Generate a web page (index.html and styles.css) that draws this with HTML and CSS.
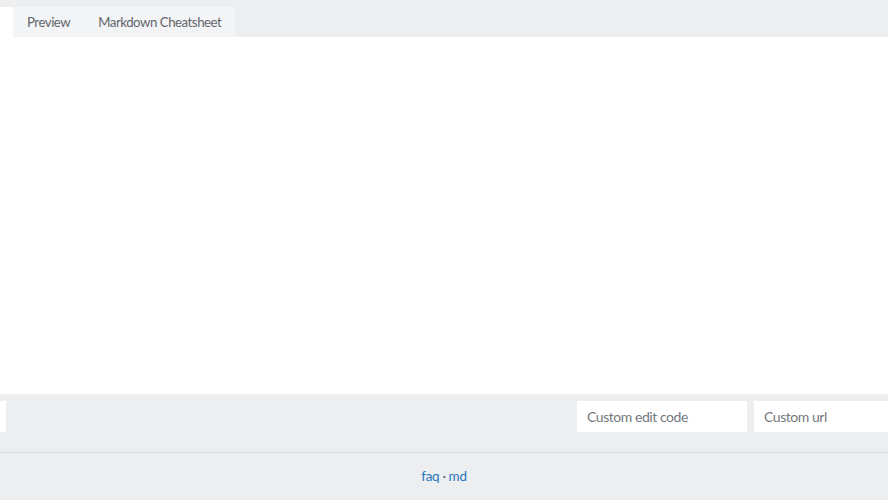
FILE: index.html
```html
<!DOCTYPE html>
<html lang="en">
<head>
<meta charset="utf-8">
<title>Editor</title>
<link rel="stylesheet" href="styles.css">
</head>
<body>
<div class="page">
  <div class="tabbar">
    <div class="tab-active"></div>
    <div class="tabs">
      <span class="tab">Preview</span>
      <span class="tab">Markdown Cheatsheet</span>
    </div>
  </div>
  <div class="editor"></div>
  <div class="actions">
    <div class="btn-cut"></div>
    <div class="spacer"></div>
    <div class="fields">
      <input class="field" type="text" placeholder="Custom edit code">
      <input class="field" type="text" placeholder="Custom url">
    </div>
  </div>
  <div class="footer">
    <a class="link" href="#">faq</a><span class="dot">·</span><a class="link" href="#">md</a>
  </div>
</div>
</body>
</html>
```

FILE: styles.css
```css
html, body {
  margin: 0;
  padding: 0;
  background: #eceef0;
  overflow: hidden;
}
.page {
  width: 888px;
  height: 500px;
  overflow: hidden;
  font-family: Lato, "Noto Sans", sans-serif;
  font-size: 13px;
}
.tabbar {
  height: 37px;
  display: flex;
  align-items: flex-end;
}
.tab-active {
  width: 13px;
  height: 30px;
  background: #ffffff;
}
.tabs {
  display: flex;
  height: 30px;
  background: #f3f4f5;
}
.tab {
  padding: 0 14px;
  line-height: 30px;
  color: #62666b;
  font-size: 13.2px;
  letter-spacing: -0.45px;
}
.editor {
  height: 357px;
  background: #ffffff;
}
.actions {
  height: 59px;
  display: flex;
  align-items: flex-start;
  padding-top: 7px;
  box-sizing: border-box;
  border-bottom: 1px solid #d9dbdd;
}
.btn-cut {
  width: 6px;
  height: 31px;
  background: #ffffff;
}
.spacer {
  flex: 1;
}
.fields {
  display: flex;
  gap: 7px;
  margin-right: -36px;
}
.field {
  width: 170px;
  height: 31px;
  box-sizing: border-box;
  border: none;
  background: #ffffff;
  padding: 0 10px;
  font-family: Lato, "Noto Sans", sans-serif;
  font-size: 14px;
  letter-spacing: -0.45px;
  color: #333;
  outline: none;
}
.field::placeholder {
  color: #74787d;
}
.footer {
  height: 46px;
  display: flex;
  justify-content: center;
  align-items: center;
  color: #5d6166;
  font-size: 13.5px;
  letter-spacing: -0.3px;
}
.link {
  color: #2b76b9;
  text-decoration: none;
}
.dot {
  margin: 0 3px;
}
```
